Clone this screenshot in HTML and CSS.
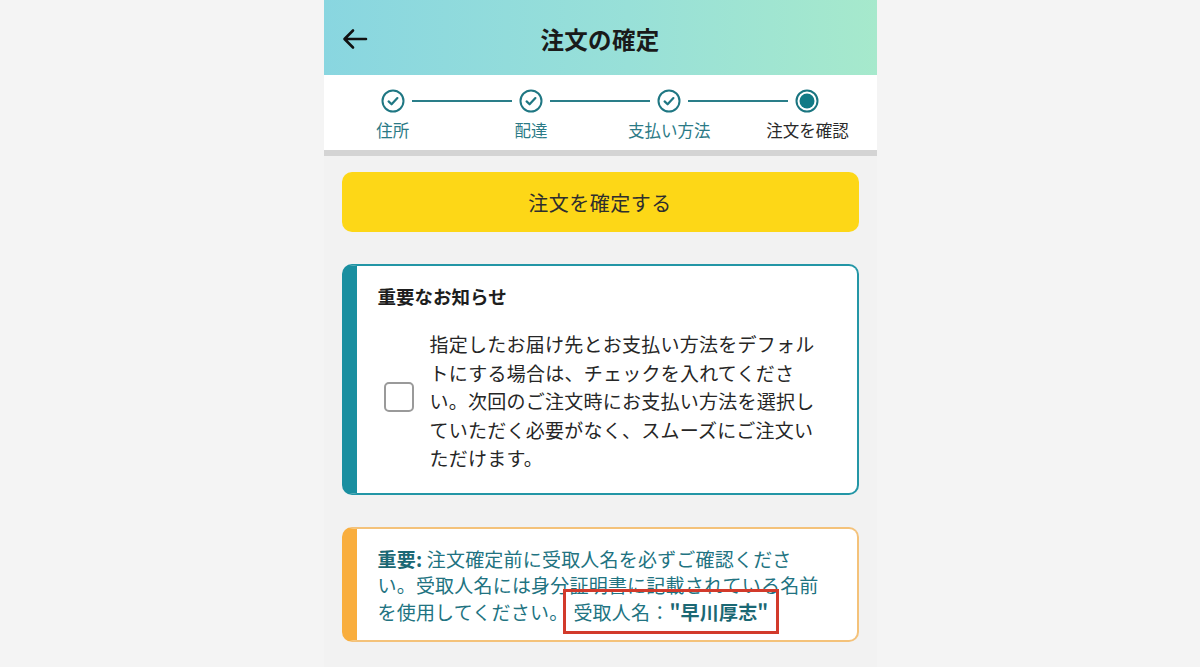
FILE: index.html
```html
<!DOCTYPE html>
<html lang="ja">
<head>
    <meta charset="UTF-8">
    <meta name="viewport" content="width=device-width, initial-scale=1.0">
    <title>注文の確定</title>
    <link rel="stylesheet" href="styles.css">
</head>
<body>
    <div class="phone">
        <header class="top-bar">
            <button class="back-btn" aria-label="戻る">
                <svg width="26" height="22" viewBox="0 0 26 22"><path d="M24 11H3 M11 2.5L2.5 11 11 19.5" fill="none" stroke="#111" stroke-width="2.6" stroke-linecap="round" stroke-linejoin="round"/></svg>
            </button>
            <h1>注文の確定</h1>
            <span></span>
        </header>

        <nav class="stepper">
            <div class="step-track">
                <svg class="step-icon" width="24" height="24" viewBox="0 0 24 24"><circle cx="12" cy="12" r="10.5" fill="#fff" stroke="#1f7783" stroke-width="2"/><path d="M7.6 12.4l3 2.9 5.8-6.2" fill="none" stroke="#1f7783" stroke-width="2.2" stroke-linecap="round" stroke-linejoin="round"/></svg>
                <span class="step-line"></span>
                <svg class="step-icon" width="24" height="24" viewBox="0 0 24 24"><circle cx="12" cy="12" r="10.5" fill="#fff" stroke="#1f7783" stroke-width="2"/><path d="M7.6 12.4l3 2.9 5.8-6.2" fill="none" stroke="#1f7783" stroke-width="2.2" stroke-linecap="round" stroke-linejoin="round"/></svg>
                <span class="step-line"></span>
                <svg class="step-icon" width="24" height="24" viewBox="0 0 24 24"><circle cx="12" cy="12" r="10.5" fill="#fff" stroke="#1f7783" stroke-width="2"/><path d="M7.6 12.4l3 2.9 5.8-6.2" fill="none" stroke="#1f7783" stroke-width="2.2" stroke-linecap="round" stroke-linejoin="round"/></svg>
                <span class="step-line"></span>
                <svg class="step-icon" width="24" height="24" viewBox="0 0 24 24"><circle cx="12" cy="12" r="10.5" fill="#fff" stroke="#1a7580" stroke-width="2"/><circle cx="12" cy="12" r="7.5" fill="#127a86"/></svg>
            </div>
            <div class="step-labels">
                <span>住所</span>
                <span>配達</span>
                <span>支払い方法</span>
                <span class="current">注文を確認</span>
            </div>
        </nav>

        <main class="content">
            <button class="confirm-btn">注文を確定する</button>

            <section class="notice-card">
                <h2>重要なお知らせ</h2>
                <label class="default-option">
                    <span class="checkbox"></span>
                    <span class="option-text">指定したお届け先とお支払い方法をデフォルトにする場合は、チェックを入れてください。次回のご注文時にお支払い方法を選択していただく必要がなく、スムーズにご注文いただけます。</span>
                </label>
            </section>

            <section class="warning-card">
                <p><strong>重要:</strong> 注文確定前に受取人名を必ずご確認ください。受取人名には身分証明書に記載されている名前を使用してください。<span class="recipient">受取人名：<b>"早川厚志"</b></span></p>
            </section>
        </main>
    </div>
</body>
</html>
```

FILE: styles.css
```css
body {
    margin: 0;
    height: 667px;
    overflow: hidden;
    background-color: #f4f4f4;
    font-family: "Noto Sans CJK JP", "Noto Sans", sans-serif;
    color: #222222;
}

.phone {
    width: 553px;
    height: 667px;
    margin: 0 auto;
    background-color: #f2f2f2;
}

/* Header */
.top-bar {
    height: 75px;
    display: grid;
    grid-template-columns: 1fr auto 1fr;
    align-items: center;
    background: linear-gradient(90deg, #89d6e0 0%, #98e0d8 55%, #a6e9cc 100%);
}

.back-btn {
    justify-self: start;
    margin-left: 18px;
    margin-top: 2px;
    padding: 0;
    border: none;
    background: none;
    display: flex;
}

.top-bar h1 {
    margin: 0;
    margin-top: 3px;
    font-size: 23.5px;
    font-weight: bold;
    color: #1a1a1a;
    letter-spacing: 0.3px;
}

/* Stepper */
.stepper {
    background-color: #ffffff;
    height: 75px;
    border-bottom: 6px solid #d4d4d4;
}

.step-track {
    display: flex;
    align-items: center;
    padding: 14px 57px 0;
}

.step-icon {
    flex: none;
    display: block;
}

.step-line {
    flex: 1;
    height: 2px;
    margin: 0 7px;
    background-color: #2a7e89;
}

.step-labels {
    display: grid;
    grid-template-columns: repeat(4, 1fr);
    text-align: center;
    margin-top: 6px;
    font-size: 16.5px;
    line-height: 22px;
    color: #2b7a86;
}

.step-labels .current {
    color: #2a2a2a;
}

/* Content */
.content {
    padding: 16px 18px 0;
    display: flex;
    flex-direction: column;
}

.confirm-btn {
    height: 60px;
    border: none;
    border-radius: 10px;
    background-color: #fdd717;
    font-family: inherit;
    font-size: 20px;
    color: #2e2e2e;
    letter-spacing: 0.5px;
}

.notice-card {
    margin-top: 32px;
    background-color: #ffffff;
    border: 2px solid #2396a6;
    border-left: 15px solid #1a8fa0;
    border-radius: 10px;
    padding: 18px 20px 20px 21px;
}

.notice-card h2 {
    margin: 0;
    font-size: 18.5px;
    line-height: 24px;
    font-weight: bold;
    color: #1e1e1e;
}

.default-option {
    display: flex;
    align-items: center;
    margin-top: 22px;
    padding-left: 6px;
}

.checkbox {
    flex: none;
    width: 26px;
    height: 26px;
    border: 2px solid #9a9a9a;
    border-radius: 5px;
    margin-right: 16px;
    margin-top: -8px;
}

.option-text {
    width: 392px;
    font-size: 19px;
    letter-spacing: 0.25px;
    line-height: 28.5px;
    color: #262626;
    line-break: strict;
}

.warning-card {
    margin-top: 32px;
    background-color: #ffffff;
    border: 2px solid #f4c27a;
    border-left: 15px solid #f9ae3e;
    border-radius: 10px;
    padding: 17px 16px 15px 21px;
}

.warning-card p {
    margin: 0;
    width: 446px;
    font-size: 19px;
    letter-spacing: 0.2px;
    line-height: 26.5px;
    color: #217381;
    line-break: strict;
}

.warning-card strong {
    color: #1b6874;
}

.recipient {
    margin-left: -5px;
    padding: 6px 7px;
    border: 3px solid #d23a2b;
}

.recipient b {
    color: #1b6874;
}
```
